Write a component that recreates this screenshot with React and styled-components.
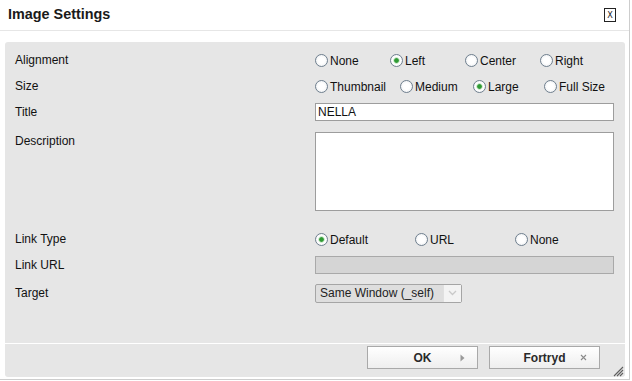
import styled, { createGlobalStyle } from 'styled-components';

const GlobalStyle = createGlobalStyle`
  html, body {
    margin: 0;
    padding: 0;
    background: #fff;
  }
  body {
    font-family: "Liberation Sans", Arial, sans-serif;
    font-size: 12px;
    color: #111;
  }
`;

const alignOptions = ['None', 'Left', 'Center', 'Right'];
const sizeOptions = ['Thumbnail', 'Medium', 'Large', 'Full Size'];
const linkOptions = ['Default', 'URL', 'None'];

const App = () => {
  return (
    <>
      <GlobalStyle />
      <Dialog>
        <Header>
          <Title>Image Settings</Title>
          <CloseBox>X</CloseBox>
        </Header>
        <Panel>
          <Form>
            <Row>
              <Label>Alignment</Label>
              <RadioGroup $cols="75px 75px 75px 75px">
                {alignOptions.map((o) => (
                  <Radio key={o} label={o} checked={o === 'Left'} />
                ))}
              </RadioGroup>
            </Row>
            <Row>
              <Label>Size</Label>
              <RadioGroup $cols="85px 73px 71px auto">
                {sizeOptions.map((o) => (
                  <Radio key={o} label={o} checked={o === 'Large'} />
                ))}
              </RadioGroup>
            </Row>
            <Row>
              <Label>Title</Label>
              <TextInput defaultValue="NELLA" />
            </Row>
            <Row $top $gap={7}>
              <Label $pad={2}>Description</Label>
              <TextArea />
            </Row>
            <Row $gap={15}>
              <Label>Link Type</Label>
              <RadioGroup $cols="100px 100px 100px">
                {linkOptions.map((o) => (
                  <Radio key={o} label={o} checked={o === 'Default'} />
                ))}
              </RadioGroup>
            </Row>
            <Row>
              <Label>Link URL</Label>
              <TextInput disabled />
            </Row>
            <Row $gap={2}>
              <Label>Target</Label>
              <SelectBox>
                <SelectText>Same Window (_self)</SelectText>
                <SelectArrow>
                  <svg width="9" height="6" viewBox="0 0 9 6">
                    <path d="M1 1 L4.5 4.5 L8 1" fill="none" stroke="#c9c9c9" strokeWidth="1.3" />
                  </svg>
                </SelectArrow>
              </SelectBox>
            </Row>
          </Form>
          <Footer>
            <Button>
              <span />
              <span>OK</span>
              <ButtonIcon>
                <svg width="5" height="8" viewBox="0 0 5 8">
                  <path d="M0.5 0.5 L4.5 4 L0.5 7.5 Z" fill="#9a9a9a" />
                </svg>
              </ButtonIcon>
            </Button>
            <Button>
              <span />
              <span>Fortryd</span>
              <ButtonIcon>
                <svg width="7" height="7" viewBox="0 0 7 7">
                  <path d="M1 1 L6 6 M6 1 L1 6" stroke="#8a8a8a" strokeWidth="1.1" />
                </svg>
              </ButtonIcon>
            </Button>
            <Grip>
              <svg width="12" height="12" viewBox="0 0 12 12">
                <path d="M11 2 L2 11 M11 5 L5 11 M11 8 L8 11" stroke="#5e5e5e" strokeWidth="1.1" />
              </svg>
            </Grip>
          </Footer>
        </Panel>
      </Dialog>
    </>
  );
};

const Radio = ({ label, checked }) => (
  <RadioItem>
    <RadioCircle $checked={checked} />
    <span>{label}</span>
  </RadioItem>
);

export default App;

const Dialog = styled.div`
  width: 629px;
  height: 379px;
  border-right: 1px solid #cdcdcd;
  border-bottom: 1px solid #cdcdcd;
  background: #fff;
  display: flex;
  flex-direction: column;
`;

const Header = styled.div`
  height: 31px;
  box-sizing: border-box;
  border-bottom: 1px solid #e6e6e6;
  padding: 0 13px 2px 8px;
  display: flex;
  align-items: center;
  justify-content: space-between;
`;

const Title = styled.div`
  font-size: 14.4px;
  font-weight: bold;
  color: #1a1a1a;
`;

const CloseBox = styled.div`
  width: 10px;
  height: 12px;
  border: 1px solid #222;
  font-family: "DejaVu Sans Condensed", "Liberation Sans Narrow", sans-serif;
  font-size: 9px;
  line-height: 12px;
  text-align: center;
  color: #222;
  margin-top: 2px;
`;

const Panel = styled.div`
  flex: 1;
  margin: 11px 4px 2px 5px;
  background: #e6e6e6;
  border-radius: 3px;
  display: flex;
  flex-direction: column;
`;

const Form = styled.div`
  flex: 1;
  padding: 5px 11px 0 10px;
  display: flex;
  flex-direction: column;
`;

const Row = styled.div`
  display: grid;
  grid-template-columns: 300px 1fr;
  align-items: ${(p) => (p.$top ? 'start' : 'center')};
  min-height: 26px;
  margin-top: ${(p) => p.$gap || 0}px;
`;

const Label = styled.div`
  padding-top: ${(p) => p.$pad || 0}px;
  color: #111;
`;

const RadioGroup = styled.div`
  display: grid;
  grid-template-columns: ${(p) => p.$cols};
  align-items: center;
  padding-top: 1px;
`;

const RadioItem = styled.label`
  display: flex;
  align-items: center;
  gap: 2px;
  white-space: nowrap;
`;

const RadioCircle = styled.span`
  width: 11px;
  height: 11px;
  border-radius: 50%;
  border: 1px solid #6f7f8e;
  background: ${(p) =>
    p.$checked
      ? 'radial-gradient(circle, #2f9a34 0 1.9px, #bfe3bf 2.7px, #fff 3.7px, #eef0f3 100%)'
      : 'radial-gradient(circle, #fff 0 3px, #e6e9ec 100%)'};
`;

const TextInput = styled.input`
  box-sizing: border-box;
  width: 299px;
  height: 18px;
  margin: 0;
  padding: 0 2px;
  border: 1px solid #9d9d9d;
  background: #fff;
  font: 12px "Liberation Sans", Arial, sans-serif;
  color: #111;
  outline: none;

  &:disabled {
    background: #d5d5d5;
    border-color: #a9a9a9;
  }
`;

const TextArea = styled.textarea`
  box-sizing: border-box;
  width: 299px;
  height: 79px;
  margin: 0;
  border: 1px solid #9d9d9d;
  background: #fff;
  resize: none;
  outline: none;
  display: block;
`;

const SelectBox = styled.div`
  box-sizing: border-box;
  width: 147px;
  height: 19px;
  border: 1px solid #a5a5a5;
  border-radius: 2px;
  background: #dedede;
  display: flex;
  align-items: stretch;
`;

const SelectText = styled.div`
  flex: 1;
  padding-left: 4px;
  line-height: 17px;
  color: #222;
`;

const SelectArrow = styled.div`
  width: 17px;
  background: #f3f3f3;
  border-left: 1px solid #e0e0e0;
  display: flex;
  align-items: center;
  justify-content: center;
`;

const Footer = styled.div`
  position: relative;
  height: 34px;
  box-sizing: border-box;
  border-top: 1px solid #fff;
  padding: 2px 25px 0 0;
  display: flex;
  justify-content: flex-end;
  align-items: flex-start;
  gap: 11px;
`;

const Button = styled.button`
  width: 111px;
  height: 23px;
  box-sizing: border-box;
  border: 1px solid #a9a9a9;
  background: linear-gradient(#ffffff, #eeeeee);
  padding: 0 12px;
  display: grid;
  grid-template-columns: 1fr auto 1fr;
  align-items: center;
  font: bold 12px "Liberation Sans", Arial, sans-serif;
  color: #2a2a2a;
`;

const ButtonIcon = styled.span`
  justify-self: end;
  display: flex;
`;

const Grip = styled.div`
  position: absolute;
  right: 1px;
  bottom: 0;
  display: flex;
`;
